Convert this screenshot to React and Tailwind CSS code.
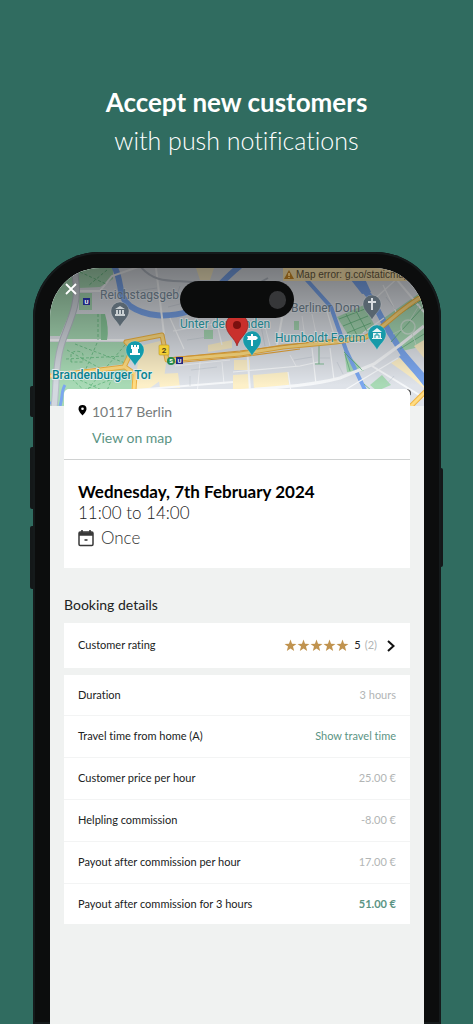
import React from "react";

const bookingRows = [
  { label: "Duration", value: "3 hours" },
  { label: "Travel time from home (A)", value: "Show travel time", link: true },
  { label: "Customer price per hour", value: "25.00 €" },
  { label: "Helpling commission", value: "-8.00 €" },
  { label: "Payout after commission per hour", value: "17.00 €" },
  { label: "Payout after commission for 3 hours", value: "51.00 €", total: true },
];

const MapPin = ({ x, y, fill, children }) => (
  <g transform={`translate(${x} ${y})`}>
    <path
      d="M0 16C-1.500 11-9 7-9 0A9 9 0 0 1 9 0C9 7 1.500 11 0 16Z"
      fill={fill}
      stroke="#fff"
      strokeOpacity="0.3"
      strokeWidth="0.6"
    />
    {children}
  </g>
);

const CityMap = () => (
  <svg
    className="block w-full h-[138px]"
    viewBox="50 268 374 138"
    preserveAspectRatio="xMidYMid slice"
    role="img"
    aria-label="Map of Berlin Mitte"
  >
    <defs>
      <linearGradient id="shade" x1="0" y1="0" x2="0" y2="1">
        <stop offset="0" stopColor="#000" stopOpacity="0.46" />
        <stop offset="0.4" stopColor="#000" stopOpacity="0.25" />
        <stop offset="0.85" stopColor="#000" stopOpacity="0" />
      </linearGradient>
    </defs>
    <rect x="50" y="268" width="374" height="138" fill="#dfe3e9" />

    {/* Parks */}
    <g fill="#a8dab5">
      <path d="M50 268H74L77 292L70 312L60 336H50Z" />
      <path d="M78 268H113V279L100 287L79 288Z" />
      <path d="M79 293H92V310H79Z" />
      <path d="M74 314H104Q109 327 107 340H64Z" />
      <path d="M50 342H125L132 349L125 364L50 373Z" />
      <path d="M50 378L124 369L132 374L131 406H50Z" />
      <path d="M337 317L364 305L376 328L350 338Z" />
      <path d="M384 318L424 290V346L402 351Z" />
      <path d="M344 350L364 371L347 372Z" />
      <path d="M370 385L382 375L391 385L377 391Z" />
      <path d="M204 330H213V339H204ZM294 321H299V330H294Z" />
      <path d="M134 357H152V360H134ZM136 369H152V372H136Z" />
    </g>

    {/* Pale commercial blocks */}
    <g fill="#fdf0c8">
      <path d="M140 346L160 341L166 364L164 378L150 388V406H136L137 370Z" />
      <path d="M158 374L178 373L180 388H160Z" />
      <path d="M208 345L232 340V348L208 352Z" />
      <path d="M233 375L249 374L249 389H233Z" />
      <path d="M253 375L288 372L289 385L254 389Z" />
      <path d="M234 360H250V370H234Z" />
      <path d="M391 363L403 356L424 380V388L412 378Z" />
      <path d="M414 346L424 340V358Z" />
      <path d="M196 268H214L210 280H200Z" />
    </g>

    {/* Water */}
    <g fill="none" stroke="#7ba7ef">
      <path d="M114 266C123 282 117 296 130 306C146 317 168 318 190 311C206 304 216 285 240 266" strokeWidth="6" />
      <path d="M305 278L331 307L346 350L366 392" strokeWidth="4" />
      <path d="M346 268L371 298L388 330L402 352L426 384" strokeWidth="6" />
      <path d="M402 354L424 379" strokeWidth="8" />
      <path d="M65 385C61 391 63 397 60 406M50 403H56" strokeWidth="3" />
    </g>
    <path d="M351 280L365 279L371 292L362 294Z" fill="#7ba7ef" />

    {/* Streets */}
    <g fill="none" stroke="#f6f8fa">
      <path d="M50 340H124M78 291H100L112 276L150 263M156 268L164 334" strokeWidth="2" />
      <path d="M233 391C270 388 310 386 340 378L374 364L400 345L424 326" strokeWidth="3" />
      <path d="M247 346L251 406M283 313L277 345M372 366L424 398M387 268L424 312M135 390L233 382" strokeWidth="2" />
      <path d="M170 318L184 349M173 331L226 322M216 320L222 345M233 372L300 366L318 362M288 372L291 392" strokeWidth="1.200" />
      <path d="M312 348L316 384M330 348L334 380M326 308L334 335M383 285L398 316M369 304L400 276M363 333L384 318M345 390L398 358" strokeWidth="1.200" />
      <path d="M302 316L306 345M312 314L318 343M264 322L270 346M175 366L230 360M200 362L196 406M222 362L224 384M290 355L296 366" strokeWidth="0.8" />
    </g>
    <g fill="none" stroke="#bdc5ce" strokeWidth="0.5">
      <path d="M136 291L157 288M139 297L157 294M175 300L180 286M168 307L180 304" />
      <path d="M187 340L208 337M191 370L217 367M294 360L312 357M320 358H330M386 297L395 309" />
      <path d="M260 321L265 346M337 362L343 374M386 385L394 376M190 376V386" />
    </g>
    <path d="M74 264L76 283C79 307 67 325 61 346C55 366 57 382 54 408" fill="none" stroke="#b6bdc7" strokeWidth="7" />
    <path d="M74 264L76 283C79 307 67 325 61 346C55 366 57 382 54 408" fill="none" stroke="#d3d8df" strokeWidth="5" />
    <path d="M140 266C157 287 177 278 207 284M236 296L268 278" fill="none" stroke="#b6bdc7" strokeWidth="2" />

    {/* Park paths */}
    <g fill="none" stroke="#61b67c" strokeWidth="0.8" strokeDasharray="3 2">
      <path d="M75 344L125 363M67 350L105 371M97 343L85 371M125 345L77 402M66 359L124 356" />
      <path d="M72 379L101 406M65 397L126 374M80 380L130 403M114 373L101 406M98 314V340" />
      <path d="M80 272L106 284M66 272L54 288M107 270L88 286" />
      <path d="M71 362V355C71 350 83 350 83 355V362Z" />
    </g>
    <path d="M101 314H105Q109 327 107 340H101Z" fill="#8acb9c" />
    <g fill="none" stroke="#5cad77" strokeWidth="0.7">
      <path d="M339 319L365 309M343 326L368 316M347 333L371 323M346 314L357 335M356 311L367 331M391 319L422 300M391 342L424 306M400 349L424 334" />
      <path d="M319 346V364M315 364H324M345 354L350 371M344 352L362 370M364 384L372 391" />
    </g>
    <g fill="none" stroke="#cfe6d6" strokeWidth="1.500">
      <circle cx="408" cy="327" r="7" />
      <path d="M393 334L401 330M410 320L420 304M412 333L416 345" strokeWidth="0.8" />
    </g>

    {/* Main roads */}
    <g fill="none" strokeLinejoin="round">
      <path d="M50 376L124 367L133 348L126 342L162 335L167 360L240 354L283 347L336 342L366 337C386 328 396 310 428 293" stroke="#efb340" strokeWidth="5" />
      <path d="M125 367L135 374L133 406M410 407L426 391" stroke="#efb340" strokeWidth="5" />
      <path d="M50 376L124 367L133 348L126 342L162 335L167 360L240 354L283 347L336 342L366 337C386 328 396 310 428 293" stroke="#ffdc82" strokeWidth="3" />
      <path d="M125 367L135 374L133 406M410 407L426 391" stroke="#ffdc82" strokeWidth="3" />
      <path d="M169 358L240 351L336 339M172 363L240 357L300 349" stroke="#e8a63a" strokeWidth="1.200" />
    </g>

    <rect x="50" y="268" width="374" height="138" fill="url(#shade)" />

    {/* Transit badges */}
    <g className="font-['Roboto',sans-serif] font-bold" textAnchor="middle">
      <rect x="83" y="298" width="7" height="7" fill="#20277d" />
      <text x="86.500" y="304" fontSize="6" fill="#fff">U</text>
      <rect x="159" y="345" width="10" height="10" rx="1" fill="#f3cf35" stroke="#b89922" strokeWidth="0.6" />
      <text x="164" y="353" fontSize="8" fill="#4b431a">2</text>
      <circle cx="171" cy="361" r="4" fill="#23884c" />
      <text x="171" y="363" fontSize="6" fill="#fff">S</text>
      <rect x="176" y="357" width="7" height="7" fill="#20277d" />
      <text x="179.500" y="363" fontSize="6" fill="#fff">U</text>
    </g>

    {/* Place names */}
    <g
      className="font-['Roboto',sans-serif]"
      fontSize="12"
      stroke="#e7eff0"
      strokeOpacity="0.4"
      strokeWidth="2"
      paintOrder="stroke"
      strokeLinejoin="round"
    >
      <text x="100" y="299" fill="#505d68" strokeOpacity="0.1">Reichstagsgeb</text>
      <text x="180" y="328" fill="#237f88">Unter den Linden</text>
      <text x="291" y="312" fill="#505d68" strokeOpacity="0.1">Berliner Dom</text>
      <text x="275" y="342" fill="#17818d">Humboldt Forum</text>
      <text x="52" y="379" fill="#07828f" strokeOpacity="0.9" fontWeight="500">Brandenburger Tor</text>
    </g>

    <MapPin x={120} y={311} fill="#58656f">
      <path d="M-5-2L0-5L5-2ZM-4-1H-2V3H-4ZM-1-1H1V3H-1ZM2-1H4V3H2ZM-5 3H5V5H-5Z" fill="#c8ced1" />
    </MapPin>
    <MapPin x={135} y={350} fill="#129bac">
      <path d="M-4-5H-2V-3H-1V-5H1V-3H2V-5H4V-1H3L3 3H5V5H-5V3H-3L-3-1H-4Z" fill="#fff" />
    </MapPin>
    <MapPin x={372} y={304} fill="#58656f">
      <path d="M-1-6H1V-3H4V-1H1V6H-1V-1H-4V-3H-1Z" fill="#d6dadd" />
    </MapPin>
    <MapPin x={377} y={334} fill="#169aa9">
      <path d="M-5-2L0-6L5-2ZM-4-1H4V4H5V5H-5V4H-4Z" fill="#e8f4f5" />
      <path d="M-2 4V1H2V4M-1 0H1" stroke="#169aa9" fill="none" />
    </MapPin>
    <MapPin x={252} y={340} fill="#169aa9">
      <path d="M-5-4H-1V-6H1V-4H4L6-2L4 0H1V6H-1V0H-5L-4-2Z" fill="#fff" />
    </MapPin>
    <path d="M237 346C235 338 226 334 226 325A11 11 0 0 1 248 325C248 334 239 338 237 346Z" fill="#c9302c" stroke="#8e1c19" strokeWidth="0.6" />
    <circle cx="237" cy="325" r="4" fill="#7b100f" />

    {/* Static map warning */}
    <rect x="283" y="268" width="141" height="13" fill="#9b8c66" fillOpacity="0.9" />
    <path d="M289 270L294 279H284Z" fill="#7d5417" />
    <path d="M289 273V276M289 277V278" stroke="#d6c08c" strokeWidth="1" />
    <text x="296" y="278" fontSize="10" fill="#3b3427" className="font-['Liberation_Sans',sans-serif]">
      Map error: g.co/staticmaps
    </text>
    <path d="M407 390Q411 390 410 395" fill="none" stroke="#444" strokeWidth="1.500" />
  </svg>
);

const Star = () => (
  <svg viewBox="0 0 24 24" className="w-[13px] h-[13px]" aria-hidden="true">
    <path d="M12 1L14.800 8.600L23 9L16.600 14L18.800 22L12 17.400L5.200 22L7.400 14L1 9L9.200 8.600Z" fill="#c0934f" />
  </svg>
);

const LocationCard = () => (
  <section className="relative -mt-[17px] mx-[14px] bg-white rounded-t-[5px]">
    <div className="h-[71px] px-[14px] pt-3 flex gap-[5px] border-b border-[#d0d2d2]">
      <svg viewBox="0 0 9 11" className="w-[9px] h-[11px] mt-1 shrink-0" aria-hidden="true">
        <path d="M4.500 0A4 4 0 0 0 .5 4C.5 6.500 4.500 10.500 4.500 10.500S8.500 6.500 8.500 4A4 4 0 0 0 4.500 0Z" />
        <circle cx="4.500" cy="3.800" r="1.300" fill="#fff" />
      </svg>
      <div className="flex flex-col items-start gap-[2px] text-[14px] leading-6">
        <p className="-mt-[1px] text-[#777b7b]">10117 Berlin</p>
        <a href="#map" className="text-[#5b9484]">View on map</a>
      </div>
    </div>
    <div className="px-[14px] pt-5 pb-5">
      <h2 className="text-[17px] leading-6 font-bold text-black">Wednesday, 7th February 2024</h2>
      <p className="text-[17px] leading-[18px] font-light text-[#202020]">11:00 to 14:00</p>
      <div className="mt-[6px] flex items-center gap-[7px] h-5">
        <svg viewBox="0 0 16 17" className="w-4 h-[17px]" fill="none" stroke="#383838" aria-hidden="true">
          <rect x="1" y="2" width="14" height="13.500" rx="1.200" strokeWidth="1.500" />
          <path d="M1 4H15" strokeWidth="3.500" />
          <path d="M4 0V3M12 0V3" strokeWidth="1.600" />
          <path d="M6.500 10H9.500" strokeWidth="1.600" />
        </svg>
        <span className="text-[17px] leading-5 font-light text-[#303030]">Once</span>
      </div>
    </div>
  </section>
);

const BookingDetails = () => (
  <section className="mx-[14px] mt-[27px]">
    <h3 className="text-[14px] leading-5 text-[#202222]">Booking details</h3>
    <button
      type="button"
      className="mt-2 w-full h-[45px] px-[14px] flex items-center justify-between bg-white text-[11px] text-[#202222]"
    >
      <span>Customer rating</span>
      <span className="flex items-center">
        <span className="flex">
          {[1, 2, 3, 4, 5].map((n) => (
            <Star key={n} />
          ))}
        </span>
        <span className="ml-[5px]">5</span>
        <span className="ml-1 text-[#b2b5b5]">(2)</span>
        <svg viewBox="0 0 8 12" className="ml-[10px] mr-[1px] w-2 h-3" fill="none" stroke="#111" strokeWidth="2" aria-hidden="true">
          <path d="M1 1L6.500 6L1 11" />
        </svg>
      </span>
    </button>

    <table className="mt-[7px] w-full h-[249px] bg-white text-[11px]">
      <tbody>
        {bookingRows.map((row) => (
          <tr key={row.label} className="border-b border-[#f3f4f4] last:border-b-0">
            <th scope="row" className="pl-[14px] text-left font-normal text-[#202222]">
              {row.label}
            </th>
            <td className="pr-[14px] text-right text-[#b2b5b5]">
              {row.link ? (
                <a href="#travel-time" className="text-[#5b9484]">{row.value}</a>
              ) : row.total ? (
                <strong className="font-bold text-[#5b9484]">{row.value}</strong>
              ) : (
                row.value
              )}
            </td>
          </tr>
        ))}
      </tbody>
    </table>
  </section>
);

const App = () => {
  return (
    <main className="min-h-screen flex flex-col bg-[#306c60] font-['Lato',sans-serif] [font-variant-ligatures:none] overflow-hidden">
      <header className="h-[252px] pt-[82px] text-center text-white">
        <h1 className="text-[26px] leading-10 font-bold">Accept new customers</h1>
        <p className="text-[25px] leading-9 font-light">with push notifications</p>
      </header>

      {/* Phone */}
      <div className="relative flex-1 flex flex-col ml-[33px] mr-8 pt-4 px-[17px] bg-[#0c0d0d] rounded-t-[66px] shadow-[inset_0_0_0_2px_#151a1b]">
        <span className="absolute -left-[3px] top-[134px] w-[3px] h-[31px] rounded-l-xs bg-[#141819]" />
        <span className="absolute -left-[3px] top-[195px] w-[3px] h-[62px] rounded-l-xs bg-[#141819]" />
        <span className="absolute -left-[3px] top-[274px] w-[3px] h-[63px] rounded-l-xs bg-[#141819]" />
        <span className="absolute -right-[2px] top-[216px] w-[2px] h-[99px] rounded-r-xs bg-[#141819]" />

        <div className="relative flex-1 bg-[#f0f2f1] rounded-t-[50px] overflow-hidden">
          <CityMap />
          <button type="button" aria-label="Close" className="absolute left-[15px] top-[15px] w-3 h-3 text-white">
            <svg viewBox="0 0 12 12" className="w-3 h-3" stroke="currentColor" strokeWidth="1.800">
              <path d="M1 1L11 11M11 1L1 11" />
            </svg>
          </button>
          <div className="absolute top-[13px] left-1/2 -translate-x-1/2 w-[114px] h-[37px] pr-2 flex items-center justify-end rounded-full bg-[#0b0c0c]">
            <span className="w-[17px] h-[18px] rounded-full bg-[#363739]" />
          </div>
          <LocationCard />
          <BookingDetails />
        </div>
      </div>
    </main>
  );
};

export default App;
